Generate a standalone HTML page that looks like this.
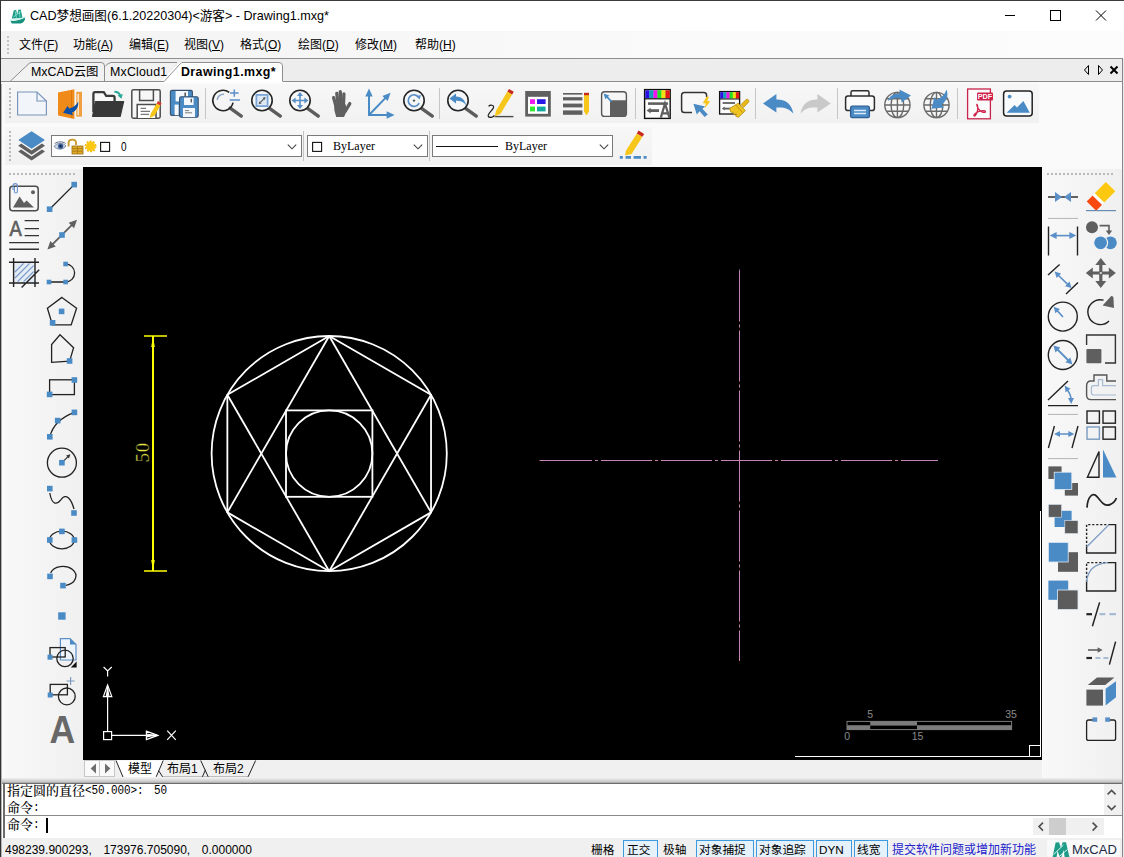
<!DOCTYPE html>
<html><head><meta charset="utf-8"><title>CAD</title>
<style>
*{box-sizing:border-box;margin:0;padding:0}
html,body{width:1124px;height:857px;overflow:hidden;background:#f0f0f0}
body{position:relative;font-family:"Liberation Sans","Noto Sans CJK SC",sans-serif;font-size:12px;color:#000}
div,span,svg{position:absolute}
#win{left:0;top:0;width:1124px;height:857px;overflow:hidden;background:#fafafa}
#bl{left:0;top:0;width:1px;height:857px;background:#333}
#bl2{left:1px;top:84px;width:1px;height:773px;background:#b4b4b4}
#bt{left:0;top:0;width:1124px;height:1px;background:#3c3c3c}
#br{left:1122px;top:58px;width:2px;height:799px;background:linear-gradient(90deg,#85858d 0,#85858d 50%,#ececec 50%,#ececec 100%)}
#title{left:1px;top:1px;width:1123px;height:30px;background:#fff}
#title .t{left:29px;top:6px;font-size:12.6px;white-space:nowrap;line-height:18px}
#menu{left:1px;top:31px;width:1123px;height:27px;background:linear-gradient(90deg,#f2f2f2,#f8f8f8 40%,#fcfcfc)}
#menu span{top:5px;font-size:12px;line-height:18px;white-space:nowrap}
#menu u{text-decoration:underline;text-underline-offset:1px}
#tabs{left:1px;top:58px;width:1122px;height:24px;background:#ededed;border-top:1px solid #8e8e8e;border-right:1px solid #8e8e8e}
.tb{background:linear-gradient(#f7f7f7,#f1f1f1)}
#tb1{left:5px;top:84px;width:1034px;height:39px}
#tb2{left:5px;top:127px;width:647px;height:38px}
#ltb{left:5px;top:169px;width:78px;height:612px;background:linear-gradient(90deg,#f8f8f8,#f0f0f0)}
#rtb{left:1043px;top:169px;width:79px;height:612px;background:linear-gradient(90deg,#f8f8f8,#f0f0f0)}
#canvas{left:83px;top:167px;width:959px;height:593px;background:#000}
#btabs{left:83px;top:760px;width:959px;height:18px;background:#f0f0f0}
#split{left:1px;top:778px;width:1122px;height:6px;background:linear-gradient(#f0f0f0,#c8c8c8 60%,#8a8a8a)}
#cmd{left:1px;top:784px;width:1122px;height:54px;background:#fff}
#status{left:1px;top:838px;width:1122px;height:19px;background:#f0f0f0}
.mono{font-family:"Liberation Serif","Noto Serif CJK SC",serif}
.sep{width:1px;background:#c4c4c4}
.combo{background:#fff;border:1px solid #7a7a7a;height:22px;top:8px}
.sbox{top:2px;height:18px;background:#e5f1fb;border:1px solid #3c9be0;border-bottom:none}
.st{top:4px;font-size:11.7px;line-height:16px;white-space:nowrap}
</style></head><body>
<div id="win">
<div id="title">
<svg style="left:7.4px;top:6px" width="19.8" height="19.8" viewBox="0 0 18 18"><path d="M3.5 10.5 L5.2 3.2 L7.4 2.6 L8.3 7 L9.4 2.6 L11.6 2.2 L13.2 10 Z" fill="#1d9a86"/><path d="M6.6 4 L7.6 9.8 M10.2 3.6 L11 9.6 M5 9 L12 4" stroke="#7fe0cf" stroke-width="0.8" fill="none"/><path d="M2.2 12.6 C6 13 11 12.2 15.6 9.6 C15.6 12.4 14 14.6 11.6 15 L3.4 15 Z" fill="#17907e"/><path d="M2 11.8 C6 12.2 11 11.2 15.4 8.8" stroke="#bfeee6" stroke-width="0.9" fill="none"/></svg>
<span class="t">CAD梦想画图(6.1.20220304)&lt;游客&gt; - Drawing1.mxg*</span>
<svg style="left:996px;top:0" width="126" height="30" viewBox="0 0 126 30"><g stroke="#000" stroke-width="1" fill="none"><path d="M8 14.5 H18"/><rect x="53.5" y="9.5" width="10" height="10"/><path d="M99 9.5 L109 19.5 M109 9.5 L99 19.5"/></g></svg>
</div>
<div id="menu">
<svg style="left:5px;top:4px" width="4" height="20"><g fill="#c2c2c2"><rect x="1" y="1" width="2" height="2"/><rect x="1" y="5" width="2" height="2"/><rect x="1" y="9" width="2" height="2"/><rect x="1" y="13" width="2" height="2"/><rect x="1" y="17" width="2" height="2"/></g></svg>
<span style="left:18px">文件(<u>F</u>)</span>
<span style="left:72px">功能(<u>A</u>)</span>
<span style="left:128px">编辑(<u>E</u>)</span>
<span style="left:183px">视图(<u>V</u>)</span>
<span style="left:239px">格式(<u>O</u>)</span>
<span style="left:297px">绘图(<u>D</u>)</span>
<span style="left:354px">修改(<u>M</u>)</span>
<span style="left:414px">帮助(<u>H</u>)</span>
</div>
<div id="tabs">
<svg style="left:0;top:0" width="1122" height="24" viewBox="0 0 1122 24">
<path d="M104.5 23 L123.5 4.5 Q124 3.5 126 3.5 L178 3.5" fill="#f1f1f1" stroke="none"/>
<path d="M104 22.5 L104 8 L109 3.5 L176 3.5 L158 22.5 Z" fill="#f2f2f2"/>
<path d="M104.5 7 Q107 4 110 3.5 L176 3.5" fill="none" stroke="#8e8e8e"/>
<path d="M9 22.5 L28 4.5 Q29 3.5 31 3.5 L100 3.5 Q103.5 3.5 103.5 7 L103.5 22.5 Z" fill="#f2f2f2" stroke="#8e8e8e"/>
<path d="M0 22.5 H162 M282 22.5 H1122" stroke="#8e8e8e" fill="none"/>
<path d="M158 23.5 L177.500 4.5 Q178.500 3.500 180.500 3.500 L278 3.500 Q281.500 3.500 281.500 7 L281.500 23.5 Z" fill="#fff"/>
<path d="M157 22.500 L163 22.5 L179.500 4.500 Q180 3.500 182 3.500 L278 3.500 Q281.500 3.500 281.500 7 L281.500 22.500" fill="none" stroke="#8e8e8e"/>
<g fill="none" stroke="#000" stroke-width="1"><path d="M1087.5 6.5 L1083.500 11 L1087.500 15.5 Z"/><path d="M1097.500 6.500 L1101.500 11 L1097.500 15.500 Z"/></g>
<path d="M1109.500 7.500 L1116.500 14.500 M1116.500 7.500 L1109.500 14.500" stroke="#000" stroke-width="2" fill="none"/>
</svg>
<span style="left:30px;top:4px;font-size:12.4px;line-height:18px;white-space:nowrap">MxCAD云图</span>
<span style="left:109px;top:4px;font-size:12.4px;line-height:18px;white-space:nowrap;letter-spacing:0.2px">MxCloud1</span>
<span style="left:180px;top:4px;font-size:12.4px;line-height:18px;white-space:nowrap;font-weight:bold;letter-spacing:0.42px">Drawing1.mxg*</span>
</div>
<div id="tb1" class="tb"></div>
<svg style="left:0;top:82px" width="1124" height="44" viewBox="0 82 1124 44"><rect x="9" y="88" width="2" height="2" fill="#b9b9b9"/><rect x="9" y="92" width="2" height="2" fill="#b9b9b9"/><rect x="9" y="96" width="2" height="2" fill="#b9b9b9"/><rect x="9" y="100" width="2" height="2" fill="#b9b9b9"/><rect x="9" y="104" width="2" height="2" fill="#b9b9b9"/><rect x="9" y="108" width="2" height="2" fill="#b9b9b9"/><rect x="9" y="112" width="2" height="2" fill="#b9b9b9"/><rect x="9" y="116" width="2" height="2" fill="#b9b9b9"/><path d="M17.6 92 H37 L46.4 101 V115 H17.6 Z" fill="#f2f5fa" stroke="#7894bc" stroke-width="1.15"/><path d="M37 92 V101 H46.4" fill="none" stroke="#7894bc" stroke-width="1.15"/><path d="M58 92.4 L74.4 89.2 V119 L58 115.6 Z" fill="#f08a18"/><path d="M76.3 91.8 H82 V116.6 H76.3 Z" fill="#f0a040"/><rect x="77.6" y="94" width="1.1" height="21" fill="#fff"/><path d="M71.5 90 V118" stroke="#d87408" stroke-width="0.8"/><path d="M63 112.800 L67.600 106 L69.200 108.400 C73.400 107.400 76.600 105 78.200 101.400 C78.800 106.600 76 111 72 112.600 L73 115.200 Z" fill="#0a50a8"/><path d="M93.400 112 V94 Q93.400 92.200 95.200 92.200 H103.800 L106.200 95.800 H112.800 Q114.600 95.800 114.600 97.600 V101.500" fill="#f8f8f8" stroke="#3a3a3a" stroke-width="2.300"/><path d="M92.600 116.400 L95.400 101.600 H123.600 L120.200 116.400 Z" fill="#383838" stroke="#383838" stroke-width="1.200" stroke-linejoin="round"/><path d="M114.400 91.800 C117.400 91.800 119.400 93.400 120.200 95.600" fill="none" stroke="#2aa898" stroke-width="2"/><path d="M117.600 95.600 L122.800 94 L121.400 98.800 Z" fill="#2aa898"/><rect x="131.8" y="89.8" width="28.4" height="28.4" rx="1.6" fill="#f7f7f7" stroke="#4c4c4c" stroke-width="1.5"/><path d="M139.6 90 V100.6 H153.4 V90" fill="none" stroke="#4c4c4c" stroke-width="1.5"/><path d="M137.2 118 V104.6 H156 V118" fill="#fff" stroke="#4c4c4c" stroke-width="1.5"/><path d="M140.6 108.4 H146 M140.6 111.4 H150 M140.6 114.4 H149" stroke="#7a7a7a" stroke-width="1.4"/><path d="M149.800 118 L150.800 113.400 L156.600 103.400 L160.400 105.600 L154.600 115.800 Z" fill="#f6c61a"/><path d="M156.600 103.400 L158 101 L161.600 103.200 L160.400 105.600 Z" fill="#d83a2a"/><rect x="170.4" y="90.4" width="22" height="25" rx="1.5" fill="#4a8bc6" stroke="#37506e" stroke-width="1.1"/><rect x="175.6" y="91" width="12.4" height="10.4" fill="#f4f7fb"/><rect x="184.4" y="92.6" width="1.6" height="4" fill="#5a5a5a"/><rect x="174.6" y="104.6" width="4" height="10.6" fill="#f4f7fb"/><rect x="179.6" y="96.8" width="18.6" height="20.4" rx="1.5" fill="#4a8bc6" stroke="#37506e" stroke-width="1.1"/><rect x="184" y="97.6" width="9.6" height="7.4" fill="#f4f7fb"/><rect x="190.6" y="98.8" width="1.4" height="3.6" fill="#5a5a5a"/><rect x="183" y="108" width="12" height="9" fill="#f4f7fb"/><path d="M185 110.6 H189 M185 112.8 H192" stroke="#7a7a7a" stroke-width="1"/><rect x="205" y="88" width="1" height="31" fill="#c6c6c6"/><rect x="439" y="88" width="1" height="31" fill="#c6c6c6"/><rect x="635" y="88" width="1" height="31" fill="#c6c6c6"/><rect x="755" y="88" width="1" height="31" fill="#c6c6c6"/><rect x="837" y="88" width="1" height="31" fill="#c6c6c6"/><rect x="957" y="88" width="1" height="31" fill="#c6c6c6"/><path d="M230.2 108.1 L241.3 116.1" stroke="#5c5c5c" stroke-width="3.4" stroke-linecap="round"/><path d="M229.2 92.4 A10.2 10.2 0 1 0 233 102.6" fill="none" stroke="#242424" stroke-width="1.6"/><path d="M217.2 100 A6.4 6.4 0 0 1 224 94.2" fill="none" stroke="#8fa9c9" stroke-width="1.6"/><path d="M230 93 H238.6 M234.3 89.4 V96.8 M229.6 100 H240" stroke="#5b8fc7" stroke-width="1.5" fill="none"/><path d="M269.2 108.1 L280.3 116.1" stroke="#5c5c5c" stroke-width="3.4" stroke-linecap="round"/><circle cx="262" cy="100.5" r="10.2" fill="#f4f6f8" stroke="#242424" stroke-width="1.6"/><rect x="256.4" y="94.9" width="11.2" height="11.2" fill="#dfe9f5" stroke="#7aa5d6" stroke-width="1.8"/><path d="M259.4 103.4 L264.8 97.8" stroke="#5a5a5a" stroke-width="1.2"/><path d="M265.60 97.00 L264.82 99.90 L262.70 97.78 Z" fill="#5a5a5a"/><path d="M258.60 104.20 L259.38 101.30 L261.50 103.42 Z" fill="#5a5a5a"/><path d="M307.2 108.1 L318.3 116.1" stroke="#5c5c5c" stroke-width="3.4" stroke-linecap="round"/><circle cx="300" cy="100.5" r="10.2" fill="#f4f6f8" stroke="#242424" stroke-width="1.6"/><path d="M293.4 100.5 H306.6 M300 93.9 V107.1" stroke="#5b8fc7" stroke-width="1.6"/><path d="M291.60 100.50 L295.60 97.50 L295.60 103.50 Z" fill="#5b8fc7"/><path d="M308.40 100.50 L304.40 103.50 L304.40 97.50 Z" fill="#5b8fc7"/><path d="M300.00 92.10 L303.00 96.10 L297.00 96.10 Z" fill="#5b8fc7"/><path d="M300.00 108.90 L297.00 104.90 L303.00 104.90 Z" fill="#5b8fc7"/><g stroke="#5f5f5f" stroke-width="3.3" stroke-linecap="round" fill="none"><path d="M333.6 97.6 L336.2 107"/><path d="M336.8 93.4 L338.2 106"/><path d="M340.3 91.7 L340.6 106"/><path d="M343.9 94 L343.4 106"/><path d="M349.8 103.6 L345.4 111"/></g><path d="M334.4 104 H345.4 L347.2 110 L344 117 H336.2 L334.3 110 Z" fill="#5f5f5f"/><path d="M369 94 V115 H388 M369 115 L386 97.4" stroke="#4a8bc6" stroke-width="2" fill="none"/><path d="M369.00 88.60 L372.70 96.60 L365.30 96.60 Z" fill="#4a8bc6"/><path d="M394.60 115.00 L386.60 118.70 L386.60 111.30 Z" fill="#4a8bc6"/><path d="M390.60 92.80 L387.70 101.12 L382.38 95.98 Z" fill="#4a8bc6"/><path d="M421.2 108.1 L432.3 116.1" stroke="#5c5c5c" stroke-width="3.4" stroke-linecap="round"/><circle cx="414" cy="100.5" r="10.2" fill="#f4f6f8" stroke="#242424" stroke-width="1.6"/><path d="M418.6 97 A5.8 5.8 0 1 0 419.2 103.2" fill="none" stroke="#5b8fc7" stroke-width="1.7"/><path d="M419.60 99.40 L416.15 96.18 L420.98 94.89 Z" fill="#5b8fc7"/><circle cx="414" cy="100.6" r="1.2" fill="#5a5a5a"/><path d="M465.2 108.1 L476.3 116.1" stroke="#5c5c5c" stroke-width="3.4" stroke-linecap="round"/><circle cx="458" cy="100.5" r="10.2" fill="#f4f6f8" stroke="#242424" stroke-width="1.6"/><path d="M449.4 98.4 L456 93.4 V96.4 C461 96.4 465 99.6 466.4 105.4 C463.6 101.6 460 100.6 456 100.8 V103.6 Z" fill="#4a8bc6"/><path d="M494.6 116.6 H513.4" stroke="#4a4a4a" stroke-width="1.4"/><path d="M494.8 116.4 L496 110.8 L507.4 91.6 L512.2 94.4 L500.6 113.8 Z" fill="#f6c61a"/><path d="M507.4 91.6 L509 89 L513.8 91.8 L512.2 94.4 Z" fill="#c8281c"/><path d="M488.6 106.4 C490 104.6 494 104.8 493.6 107.4 C493 110 487.6 113.4 488.2 116 C489 118.4 493 117.6 494.4 115.4" fill="none" stroke="#1a1a1a" stroke-width="1.2"/><rect x="525.2" y="91" width="25.6" height="25.6" fill="#606060"/><rect x="528" y="96.8" width="20" height="17" fill="#fff"/><rect x="530" y="99.2" width="5" height="4.8" fill="#f018f0"/><rect x="537" y="99.2" width="8.6" height="4.8" fill="#2a18e8"/><rect x="530" y="106.6" width="5" height="4.8" fill="#30e830"/><rect x="537" y="106.6" width="8.6" height="4.8" fill="#12a8a0"/><rect x="563" y="93" width="19.4" height="1.6" fill="#5f5f5f"/><rect x="563" y="97.2" width="19.4" height="3.2" fill="#5f5f5f"/><rect x="563" y="103.6" width="19.4" height="3.8" fill="#5f5f5f"/><rect x="563" y="110.4" width="19.4" height="4.4" fill="#5f5f5f"/><path d="M584 95 H589 V111.6 L586.5 115.4 L584 111.6 Z" fill="#f6c61a"/><rect x="584" y="92.8" width="5" height="2.4" fill="#c8281c"/><rect x="601.6" y="91.8" width="24.8" height="24.6" rx="3" fill="#f6f6f6" stroke="#555" stroke-width="1.4"/><path d="M610 100.2 H626.4 V113.4 Q626.4 116.4 623.4 116.4 H610 Z" fill="#5f5f5f"/><path d="M611.4 101.6 L606.6 96.4" stroke="#4a8bc6" stroke-width="1.6"/><path d="M603.60 93.40 L609.33 95.44 L605.24 99.26 Z" fill="#4a8bc6"/><rect x="644.6" y="89.6" width="25.6" height="28.8" fill="#fdfdfd" stroke="#111" stroke-width="1.4"/><rect x="645.30" y="90.3" width="4.33" height="8" fill="#2a10e0"/><rect x="649.33" y="90.3" width="4.33" height="8" fill="#12a0b8"/><rect x="653.37" y="90.3" width="4.33" height="8" fill="#f010f0"/><rect x="657.40" y="90.3" width="4.33" height="8" fill="#20e020"/><rect x="661.43" y="90.3" width="4.33" height="8" fill="#f0e010"/><rect x="665.47" y="90.3" width="4.33" height="8" fill="#e01818"/><path d="M645 98.8 H670" stroke="#111" stroke-width="1.2"/><path d="M648 103.600 H668" stroke="#5f5f5f" stroke-width="2.600"/><path d="M650 110.600 H659" stroke="#5f5f5f" stroke-width="2.800"/><path d="M646.60 110.60 L650.60 107.80 L650.60 113.40 Z" fill="#5f5f5f"/><path d="M660.800 117.600 L665 103.600 L669.400 117.600 M662.400 113.400 H668" fill="none" stroke="#5f5f5f" stroke-width="2.200"/><path d="M692 112.6 H684.4 Q681.6 112.6 681.6 109.8 V95.2 Q681.6 92.4 684.4 92.4 H703.8 Q706.6 92.4 706.6 95.2 V97" fill="#f8f8f8" stroke="#333" stroke-width="1.5"/><path d="M693.4 103.8 L705.2 106.6 L702.4 108.8 L707.8 114.4 L704.6 117 L699.6 111.2 L696.8 114.6 Z" fill="#4a8bc6"/><path d="M706.8 96.6 L702.8 103 L705.8 103.6 L704.6 108.4 L710.2 101.4 L707.2 100.8 L709 96.8 Z" fill="#f6c61a"/><rect x="719.6" y="91.6" width="20" height="22.4" fill="#fdfdfd" stroke="#111" stroke-width="1.3"/><rect x="720.20" y="92.2" width="3.43" height="6.4" fill="#2a10e0"/><rect x="723.33" y="92.2" width="3.43" height="6.4" fill="#12a0b8"/><rect x="726.47" y="92.2" width="3.43" height="6.4" fill="#f010f0"/><rect x="729.60" y="92.2" width="3.43" height="6.4" fill="#20e020"/><rect x="732.73" y="92.2" width="3.43" height="6.4" fill="#f0e010"/><rect x="735.87" y="92.2" width="3.43" height="6.4" fill="#e01818"/><path d="M720 99 H739.6" stroke="#111" stroke-width="1"/><path d="M722.6 103 H735" stroke="#5f5f5f" stroke-width="1.8"/><path d="M724.6 108.6 H732" stroke="#5f5f5f" stroke-width="1.8"/><path d="M721.80 108.60 L724.80 106.60 L724.80 110.60 Z" fill="#5f5f5f"/><path d="M741 104.6 L746 99.6 Q747.6 98.6 748.6 100 Q749.4 101.2 748.4 102.4 L743.6 107.4 Z" fill="#e8b818" stroke="#a88408" stroke-width="0.6"/><path d="M729.6 108.4 L738.2 103.2 L745.4 110.6 L738.4 117.4 L735.6 116 L736.4 114 L733.4 114.6 L733.6 112.4 L730.8 112.2 Z" fill="#f0c420" stroke="#a88408" stroke-width="0.7"/><path d="M735.6 104.8 L742.8 112.6" stroke="#a88408" stroke-width="0.8"/><path d="M763 103.4 L776.4 94 V99.6 C785 99.4 791.6 103.6 793.4 113.8 C789.4 108.4 783.6 107 776.4 107.6 V112.6 Z" fill="#4a8bc6"/><path d="M830.8 103.4 L817.4 94 V99.6 C808.800 99.400 802.200 103.600 800.400 113.800 C804.400 108.400 810.200 107 817.400 107.600 V112.600 Z" fill="#c9c9c9"/><rect x="851" y="90.8" width="18" height="8" rx="1.6" fill="#fafafa" stroke="#2e2e2e" stroke-width="1.5"/><rect x="845.6" y="96" width="28.8" height="14.6" rx="2.4" fill="#fbfbfb" stroke="#2e2e2e" stroke-width="1.5"/><rect x="850.6" y="106.2" width="18.8" height="11.4" rx="1.6" fill="#4a8bc6" stroke="#2f5f94" stroke-width="1.3"/><path d="M854 110.4 H866 M854 113.6 H866" stroke="#dcecfa" stroke-width="1.5"/><g fill="none" stroke="#6a6a6a" stroke-width="1.4"><circle cx="897.4" cy="105" r="12.6" fill="#f6f6f6"/><ellipse cx="897.4" cy="105" rx="6.3" ry="12.6"/><path d="M897.4 92.4 V117.6 M884.8 105 H910.0 M886.438 98.7 H908.362 M886.438 111.3 H908.362"/></g><path d="M888 101 C889.6 95.6 894.4 93.4 900 93.6 L899.4 89.6 L911 95.4 L901.6 102.4 L901 98.4 C896 97.600 891.6 98.4 888 101 Z" fill="#4a8bc6"/><g fill="none" stroke="#6a6a6a" stroke-width="1.4"><circle cx="936.5" cy="105" r="12.6" fill="#f6f6f6"/><ellipse cx="936.5" cy="105" rx="6.3" ry="12.6"/><path d="M936.5 92.4 V117.6 M923.9 105 H949.1 M925.538 98.7 H947.462 M925.538 111.3 H947.462"/></g><path d="M946.4 89.6 C949 96 946.4 101.4 941.6 104.600 L944 107.400 L931.6 108.8 L934.4 97 L937 100 C941.400 97.800 945 94.600 946.400 89.600 Z" fill="#4a8bc6"/><rect x="967.6" y="89" width="22.8" height="29.8" fill="#fbfbfb" stroke="#c8244c" stroke-width="1.3"/><rect x="977" y="92.4" width="16" height="8" rx="1" fill="#d0214a"/><text x="985" y="99.2" font-family="Liberation Sans,sans-serif" font-weight="bold" font-size="7.2" fill="#fff" text-anchor="middle">PDF</text><path d="M976.8 104.6 C977.4 108 978.6 110 981.6 111.6 C983.6 112.6 985.6 112.8 985.4 111.4 C985 110 981 110.4 977.6 112 C974.6 113.6 973 115.6 974.4 116 C976 116 978 111 977.8 107.600 C977.600 105 976.600 103.800 976.800 104.600 Z" fill="none" stroke="#d0214a" stroke-width="1.3"/><rect x="1003.6" y="91" width="28.6" height="25" rx="3" fill="#f8fafc" stroke="#222" stroke-width="1.5"/><circle cx="1009.6" cy="96.6" r="1.9" fill="#4a8bc6"/><path d="M1006.6 112.8 L1014.6 105 L1017 107.4 L1023.4 101 L1029.8 112.800 Z" fill="#4a8bc6"/></svg>
<div id="tb2" class="tb"></div>
<svg style="left:0;top:126px" width="1124" height="41" viewBox="0 126 1124 41"><rect x="9" y="131" width="2" height="2" fill="#b9b9b9"/><rect x="9" y="135" width="2" height="2" fill="#b9b9b9"/><rect x="9" y="139" width="2" height="2" fill="#b9b9b9"/><rect x="9" y="143" width="2" height="2" fill="#b9b9b9"/><rect x="9" y="147" width="2" height="2" fill="#b9b9b9"/><rect x="9" y="151" width="2" height="2" fill="#b9b9b9"/><rect x="9" y="155" width="2" height="2" fill="#b9b9b9"/><rect x="9" y="159" width="2" height="2" fill="#b9b9b9"/><path d="M18.2 151.6 L31.600 160.6 L45 151.6 L42 149.4 L31.6 156.4 L21.2 149.4 Z" fill="#5f5f5f"/><path d="M18.2 145.800 L31.600 154.800 L45 145.800 L42 143.600 L31.600 150.600 L21.200 143.600 Z" fill="#5f5f5f"/><path d="M18.4 140 L31.6 131.200 L44.800 140 L31.6 148.800 Z" fill="#4a8bc6" stroke="#f4f4f4" stroke-width="1.4" stroke-linejoin="round"/><path d="M19.4 140 L31.6 132 L43.800 140 L31.6 148 Z" fill="#4a8bc6" stroke="#4a8bc6" stroke-width="1.4" stroke-linejoin="round"/></svg>
<div class="combo" style="left:51px;top:135px;width:251px"></div>
<div class="combo" style="left:307px;top:135px;width:121px"></div>
<div class="combo" style="left:432px;top:135px;width:181px"></div>
<div class="sep" style="left:303px;top:131px;height:30px"></div><div class="sep" style="left:429px;top:131px;height:30px"></div>
<svg style="left:0;top:126px" width="1124" height="41" viewBox="0 126 1124 41"><path d="M54 146.4 C57 142.4 63 142.2 66 146 C63.4 150 57 150.2 54 146.4 Z" fill="#c8d4e4" stroke="#6a7a94" stroke-width="0.8"/><circle cx="60.600" cy="146.2" r="2.6" fill="#3a5f9a"/><circle cx="60.6" cy="146.2" r="1.1" fill="#0c1c3c"/><path d="M54.600 143.6 C57.6 141.4 62.600 141.200 65.600 143.400" stroke="#5a6a84" stroke-width="1" fill="none"/><path d="M68.6 146.6 V143 C68.6 138.6 76 138.6 76 143 V145" fill="none" stroke="#c89828" stroke-width="1.8"/><rect x="72" y="146" width="11" height="8" fill="#e0a828" stroke="#9a7010" stroke-width="0.8"/><path d="M72.4 148.6 H82.600 M72.400 151.2 H82.600 M77.500 146.4 V153.600" stroke="#9a7010" stroke-width="0.7"/><circle cx="90.6" cy="146.4" r="4.6" fill="#fcc810"/><circle cx="90.600" cy="146.400" r="5.2" fill="none" stroke="#f8b808" stroke-width="1.4" stroke-dasharray="2 1.27"/><rect x="100.6" y="142.4" width="9" height="9" fill="#fff" stroke="#111" stroke-width="1.1"/><rect x="312.600" y="142.400" width="9" height="9" fill="#fff" stroke="#111" stroke-width="1.100"/><path d="M287.8 144.6 L292 148.8 L296.2 144.6" fill="none" stroke="#444" stroke-width="1.1"/><path d="M413.8 144.6 L418 148.8 L422.2 144.6" fill="none" stroke="#444" stroke-width="1.1"/><path d="M599.8 144.6 L604 148.8 L608.2 144.6" fill="none" stroke="#444" stroke-width="1.1"/><path d="M436 146.5 H498" stroke="#111" stroke-width="1"/><path d="M625 155.600 L626 150.600 L636.800 133.400 L642.400 136.800 L631.600 154 Z" fill="#f6c61a"/><path d="M636.800 133.400 L638.600 130.600 L644.200 134 L642.400 136.800 Z" fill="#c8281c"/><path d="M619.800 157.400 H622.800 M625.600 157.400 H631 M633.600 157.400 H641 M643.600 157.400 H646.600" stroke="#4a8bc6" stroke-width="2.6"/></svg>
<span style="left:120.6px;top:139.5px;font-size:12.5px;line-height:14px;transform:scaleX(0.8);transform-origin:0 0">0</span>
<span class="mono" style="left:333px;top:139px;font-size:12px;line-height:14px">ByLayer</span>
<span class="mono" style="left:505px;top:139px;font-size:12px;line-height:14px">ByLayer</span>
<div id="ltb"></div>
<svg style="left:0;top:167px" width="84" height="615" viewBox="0 167 84 615"><rect x="9" y="173" width="2" height="2" fill="#b9b9b9"/><rect x="13" y="173" width="2" height="2" fill="#b9b9b9"/><rect x="17" y="173" width="2" height="2" fill="#b9b9b9"/><rect x="21" y="173" width="2" height="2" fill="#b9b9b9"/><rect x="25" y="173" width="2" height="2" fill="#b9b9b9"/><rect x="29" y="173" width="2" height="2" fill="#b9b9b9"/><rect x="33" y="173" width="2" height="2" fill="#b9b9b9"/><rect x="37" y="173" width="2" height="2" fill="#b9b9b9"/><rect x="41" y="173" width="2" height="2" fill="#b9b9b9"/><rect x="45" y="173" width="2" height="2" fill="#b9b9b9"/><rect x="49" y="173" width="2" height="2" fill="#b9b9b9"/><rect x="53" y="173" width="2" height="2" fill="#b9b9b9"/><rect x="57" y="173" width="2" height="2" fill="#b9b9b9"/><rect x="61" y="173" width="2" height="2" fill="#b9b9b9"/><rect x="65" y="173" width="2" height="2" fill="#b9b9b9"/><rect x="69" y="173" width="2" height="2" fill="#b9b9b9"/><rect x="73" y="173" width="2" height="2" fill="#b9b9b9"/><rect x="9.8" y="186.200" width="28.4" height="24.6" rx="3" fill="#f7f7f7" stroke="#4a4a4a" stroke-width="1.5"/><circle cx="33" cy="192.200" r="2" fill="#5f5f5f"/><path d="M13 207.600 L19.6 196.600 L24 203 L26.600 200.400 L34 207.600 Z" fill="#5f5f5f"/><path d="M13 190 V186 Q13 183.600 15.200 183.600 Q17.400 183.600 17.400 186 V191.400 Q17.400 193 15.800 193 Q14.400 193 14.400 191.400 V187" fill="none" stroke="#6a96cc" stroke-width="1.1"/><path d="M49.6 209.2 L74.2 184.6" stroke="#222" stroke-width="1.3"/><rect x="46.80" y="206.40" width="5.6" height="5.6" fill="#4a8bc6"/><rect x="71.40" y="181.80" width="5.6" height="5.6" fill="#4a8bc6"/><text x="0" y="0" transform="translate(9.4 236.4) scale(0.86 1)" font-family="Liberation Sans,sans-serif" font-size="21.4" fill="#5f5f5f" stroke="#5f5f5f" stroke-width="0.7">A</text><path d="M24.6 220.600 H39 M24.600 228.600 H39 M24.600 235.600 H39 M9.200 242.600 H39 M9.200 249.200 H39" stroke="#333" stroke-width="1.4"/><path d="M51.4 245.4 L73 223.800" stroke="#5f5f5f" stroke-width="1.8"/><path d="M77.00 219.80 L74.03 228.14 L68.66 222.77 Z" fill="#5f5f5f"/><path d="M47.40 249.40 L50.37 241.06 L55.74 246.43 Z" fill="#5f5f5f"/><rect x="59.20" y="232.20" width="5.6" height="5.6" fill="#4a8bc6"/><rect x="14" y="262.400" width="20.600" height="20.400" fill="#e4ecf6"/><path d="M15 272 L23.600 263.400 M15 278 L29.600 263.400 M17.600 281.600 L33.600 265.600 M23.600 281.600 L33.600 271.600" stroke="#7a9ac8" stroke-width="1.3"/><path d="M13.600 258 V287 M35 258 V287 M9 262.200 H39 M9 283 H39 M21.600 287.400 L39.200 269.800" stroke="#222" stroke-width="1.4" fill="none"/><path d="M49 282 H65.600 A9 9 0 0 0 65.600 264" fill="none" stroke="#222" stroke-width="1.3"/><rect x="46.70" y="279.70" width="4.6" height="4.6" fill="#4a8bc6"/><rect x="63.30" y="279.70" width="4.6" height="4.6" fill="#4a8bc6"/><rect x="63.30" y="261.70" width="4.6" height="4.6" fill="#4a8bc6"/><path d="M61.900 297.400 L76.600 308.200 L71.200 324.800 H52.400 L47.400 308.200 Z" fill="none" stroke="#222" stroke-width="1.3"/><rect x="58.80" y="308.60" width="5.6" height="5.6" fill="#4a8bc6"/><rect x="49.80" y="320.00" width="5.6" height="5.6" fill="#4a8bc6"/><path d="M60 334.800 L73.600 347.800 L69.600 361.200 L51.600 362.400 V344.600 Z" fill="none" stroke="#222" stroke-width="1.3"/><rect x="66.80" y="358.20" width="5.6" height="5.6" fill="#4a8bc6"/><rect x="49.600" y="379.800" width="24.800" height="14.800" fill="none" stroke="#222" stroke-width="1.3"/><rect x="46.80" y="391.60" width="5.6" height="5.6" fill="#4a8bc6"/><rect x="71.60" y="377.20" width="5.6" height="5.6" fill="#4a8bc6"/><path d="M49.800 436.800 Q54 420 74.400 412.400" fill="none" stroke="#222" stroke-width="1.3"/><rect x="47.00" y="434.00" width="5.6" height="5.6" fill="#4a8bc6"/><rect x="54.90" y="417.80" width="5.6" height="5.6" fill="#4a8bc6"/><rect x="71.60" y="409.60" width="5.6" height="5.6" fill="#4a8bc6"/><circle cx="61.900" cy="462.700" r="14.500" fill="none" stroke="#222" stroke-width="1.3"/><path d="M62 462.600 L68 456.600" stroke="#333" stroke-width="1.3"/><path d="M70.40 454.20 L68.99 458.44 L66.16 455.61 Z" fill="#333"/><rect x="59.10" y="459.90" width="5.6" height="5.6" fill="#4a8bc6"/><path d="M49.800 493 C52 506 57 504.600 61 499.600 C66 493 71 498 74 509" fill="none" stroke="#222" stroke-width="1.3"/><rect x="47.00" y="485.80" width="5.6" height="5.6" fill="#4a8bc6"/><rect x="71.20" y="510.20" width="5.6" height="5.6" fill="#4a8bc6"/><ellipse cx="61.900" cy="540" rx="12.300" ry="8.800" fill="none" stroke="#222" stroke-width="1.3"/><rect x="47.00" y="537.20" width="5.6" height="5.6" fill="#4a8bc6"/><rect x="59.10" y="528.60" width="5.6" height="5.6" fill="#4a8bc6"/><rect x="71.60" y="537.20" width="5.6" height="5.6" fill="#4a8bc6"/><path d="M50.600 573 A13 9.600 0 1 1 66 585.400" fill="none" stroke="#222" stroke-width="1.3"/><rect x="47.20" y="573.60" width="5.6" height="5.6" fill="#4a8bc6"/><rect x="60.20" y="582.80" width="5.6" height="5.6" fill="#4a8bc6"/><rect x="58.20" y="612.30" width="7.4" height="7.4" fill="#4a8bc6"/><path d="M60.400 638.600 H70 L76 644.600 V660 H60.400 Z" fill="#eef4fb" stroke="#5b8fc7" stroke-width="1.2"/><path d="M70 638.600 V644.600 H76 Z" fill="#4a8bc6"/><rect x="50" y="647.600" width="15.200" height="9.400" fill="none" stroke="#222" stroke-width="1.3"/><circle cx="65" cy="658.400" r="8.200" fill="none" stroke="#222" stroke-width="1.3"/><rect x="47.50" y="654.70" width="5" height="5" fill="#4a8bc6"/><path d="M76.600 661.600 V667.400 H70.800 Z" fill="#111"/><rect x="50.200" y="684.400" width="17.200" height="10.400" fill="none" stroke="#222" stroke-width="1.3"/><circle cx="66.800" cy="696.400" r="8.400" fill="none" stroke="#222" stroke-width="1.3"/><rect x="47.70" y="692.50" width="5" height="5" fill="#4a8bc6"/><path d="M66.600 681 H74.600 M70.600 677 V685" stroke="#7a9ac0" stroke-width="1.2"/><text x="62.4" y="743.4" font-family="Liberation Sans,sans-serif" font-weight="bold" font-size="39.5" fill="#686868" text-anchor="middle" transform="translate(62.4 0) scale(0.9 1) translate(-62.4 0)">A</text></svg>
<div id="rtb"></div>
<svg style="left:1040px;top:167px" width="84" height="615" viewBox="1040 167 84 615"><rect x="1047" y="173" width="2" height="2" fill="#b9b9b9"/><rect x="1051" y="173" width="2" height="2" fill="#b9b9b9"/><rect x="1055" y="173" width="2" height="2" fill="#b9b9b9"/><rect x="1059" y="173" width="2" height="2" fill="#b9b9b9"/><rect x="1063" y="173" width="2" height="2" fill="#b9b9b9"/><rect x="1067" y="173" width="2" height="2" fill="#b9b9b9"/><rect x="1071" y="173" width="2" height="2" fill="#b9b9b9"/><rect x="1075" y="173" width="2" height="2" fill="#b9b9b9"/><rect x="1079" y="173" width="2" height="2" fill="#b9b9b9"/><rect x="1083" y="173" width="2" height="2" fill="#b9b9b9"/><rect x="1087" y="173" width="2" height="2" fill="#b9b9b9"/><rect x="1091" y="173" width="2" height="2" fill="#b9b9b9"/><rect x="1095" y="173" width="2" height="2" fill="#b9b9b9"/><rect x="1099" y="173" width="2" height="2" fill="#b9b9b9"/><rect x="1103" y="173" width="2" height="2" fill="#b9b9b9"/><rect x="1107" y="173" width="2" height="2" fill="#b9b9b9"/><rect x="1111" y="173" width="2" height="2" fill="#b9b9b9"/><path d="M1048 197 H1078" stroke="#222" stroke-width="1.4"/><path d="M1062.00 197.00 L1055.00 202.00 L1055.00 192.00 Z" fill="#5b8fc7"/><path d="M1064.00 197.00 L1071.00 192.00 L1071.00 202.00 Z" fill="#5b8fc7"/><path d="M1048 218.4 H1078" stroke="#b4b4b4" stroke-width="1"/><path d="M1048 414.4 H1078" stroke="#b4b4b4" stroke-width="1"/><path d="M1048 458.6 H1078" stroke="#b4b4b4" stroke-width="1"/><g transform="rotate(-45.5 1101 196.4)"><rect x="1087.35" y="189.800" width="8.5" height="13.2" fill="#f84a10"/><rect x="1095.85" y="189.800" width="3" height="13.2" fill="#fff"/><rect x="1098.85" y="189.800" width="15.8" height="13.2" fill="#fcc810"/></g><path d="M1086 210.600 H1116" stroke="#6a8ab0" stroke-width="1.2"/><path d="M1048.500 226.600 V255.600 M1077.500 226.600 V255.600" stroke="#222" stroke-width="1.4"/><path d="M1055 235.600 H1071" stroke="#5b8fc7" stroke-width="1.6"/><path d="M1049.60 235.60 L1056.60 232.10 L1056.60 239.10 Z" fill="#5b8fc7"/><path d="M1076.40 235.60 L1069.40 239.10 L1069.40 232.10 Z" fill="#5b8fc7"/><circle cx="1092" cy="227.200" r="6" fill="#5f5f5f"/><path d="M1099.600 225.600 H1109 V231" fill="none" stroke="#5f5f5f" stroke-width="1.6"/><path d="M1109.00 235.00 L1105.80 230.40 L1112.20 230.40 Z" fill="#5f5f5f"/><circle cx="1110.400" cy="242.800" r="6.400" fill="#4a8bc6"/><circle cx="1100.600" cy="242.800" r="7" fill="#4a8bc6" stroke="#f4f4f4" stroke-width="1.2"/><path d="M1048 275 L1059.600 264.400 M1066 294 L1078 282.400" stroke="#222" stroke-width="1.4"/><path d="M1058 275 L1068 284.600" stroke="#5b8fc7" stroke-width="1.6"/><path d="M1054.60 271.60 L1061.14 273.47 L1056.69 278.07 Z" fill="#5b8fc7"/><path d="M1071.60 288.00 L1065.06 286.13 L1069.51 281.53 Z" fill="#5b8fc7"/><path d="M1090.8 273 H1110.8 M1100.8 263 V283" stroke="#5f5f5f" stroke-width="3.2"/><path d="M1085.80 273.00 L1092.80 267.50 L1092.80 278.50 Z" fill="#5f5f5f"/><path d="M1115.80 273.00 L1108.80 278.50 L1108.80 267.50 Z" fill="#5f5f5f"/><path d="M1100.80 258.00 L1106.30 265.00 L1095.30 265.00 Z" fill="#5f5f5f"/><path d="M1100.80 288.00 L1095.30 281.00 L1106.30 281.00 Z" fill="#5f5f5f"/><rect x="1099.8" y="272" width="2" height="2" fill="#d0d0d0"/><circle cx="1062.800" cy="316.600" r="14.500" fill="none" stroke="#222" stroke-width="1.4"/><path d="M1063 317 L1057 310.400" stroke="#5b8fc7" stroke-width="1.6"/><path d="M1053.60 306.80 L1060.03 309.01 L1055.35 313.37 Z" fill="#5b8fc7"/><path d="M1109 321 A12.400 12.400 0 1 1 1103.600 300.200" fill="none" stroke="#222" stroke-width="1.4"/><path d="M1102.600 305.600 L1111 296.200 Q1113 295.600 1113.400 297.600 L1114 308 Z" fill="#5f5f5f"/><circle cx="1062.800" cy="355" r="14.500" fill="none" stroke="#222" stroke-width="1.4"/><path d="M1057 349 L1069 361" stroke="#5b8fc7" stroke-width="1.800"/><path d="M1053.40 345.40 L1060.40 347.45 L1055.45 352.40 Z" fill="#5b8fc7"/><path d="M1072.40 364.40 L1065.40 362.35 L1070.35 357.40 Z" fill="#5b8fc7"/><path d="M1086.600 345 V335 H1115.400 V363 H1105" fill="none" stroke="#333" stroke-width="1.4"/><rect x="1086.400" y="349" width="15" height="14.200" rx="1" fill="#5f5f5f"/><path d="M1048 405.600 H1078 M1048 400 L1068 381" stroke="#222" stroke-width="1.4" fill="none"/><path d="M1067.400 390 Q1071 395 1071 399" fill="none" stroke="#5b8fc7" stroke-width="1.500"/><path d="M1064.60 385.60 L1070.50 388.79 L1065.58 392.24 Z" fill="#5b8fc7"/><path d="M1071.20 404.00 L1067.99 398.11 L1073.99 397.90 Z" fill="#5b8fc7"/><path d="M1116 399.600 H1091 Q1086.600 399.600 1086.600 395 V386 Q1086.600 381 1091 381 H1094 V375 H1106.800 V381 H1116" fill="none" stroke="#555" stroke-width="1.400"/><path d="M1116 395 H1093.600 Q1091.400 395 1091.400 392.600 V388 Q1091.400 385.600 1093.600 385.600 H1098.400 V379.600 H1102.600 V385.600 H1116" fill="none" stroke="#a8bcd4" stroke-width="1.200"/><rect x="1087" y="411" width="12.400" height="12.200" fill="none" stroke="#222" stroke-width="1.400"/><rect x="1103" y="411" width="12.400" height="12.200" fill="none" stroke="#222" stroke-width="1.400"/><rect x="1103" y="427" width="12.400" height="12.200" fill="none" stroke="#222" stroke-width="1.400"/><rect x="1087" y="427" width="12.400" height="12.200" fill="none" stroke="#7a9ac0" stroke-width="1.400"/><path d="M1048.400 448 L1054.400 426 M1072 448 L1078 426" stroke="#222" stroke-width="1.400"/><path d="M1059 434 H1069" stroke="#5b8fc7" stroke-width="1.500"/><path d="M1054.00 434.00 L1060.00 431.00 L1060.00 437.00 Z" fill="#5b8fc7"/><path d="M1074.40 434.00 L1068.40 437.00 L1068.40 431.00 Z" fill="#5b8fc7"/><path d="M1087.400 477.200 H1099 V451.600 Z" fill="none" stroke="#222" stroke-width="1.400"/><path d="M1103 449.600 V477.600 H1116.400 Z" fill="#4a8bc6"/><rect x="1048.400" y="466.400" width="13.200" height="12.600" fill="#5c5c5c"/><rect x="1064.800" y="483" width="13.200" height="12.600" fill="#5c5c5c"/><rect x="1054.200" y="472.200" width="17.600" height="17.200" fill="#4a8bc6" stroke="#dfe9f5" stroke-width="0.800"/><path d="M1087 507.600 C1087.600 497 1092.600 491.600 1097 496.600 C1101 501.600 1104.600 507 1110 504.600 C1113.600 503 1115.600 500.600 1116.400 498" fill="none" stroke="#222" stroke-width="1.700"/><rect x="1054.600" y="510.800" width="17" height="16.200" fill="#4a8bc6"/><rect x="1048.400" y="504.400" width="13.200" height="12.800" fill="#5c5c5c" stroke="#dfe9f5" stroke-width="0.600"/><rect x="1064.800" y="520.600" width="13.200" height="13" fill="#5c5c5c" stroke="#dfe9f5" stroke-width="0.600"/><path d="M1109 524.600 H1115.600 V553 H1086.600 V547" fill="none" stroke="#222" stroke-width="1.400"/><path d="M1086.600 547 V524.600 H1109" fill="none" stroke="#222" stroke-width="1.400" stroke-dasharray="2.200 1.800"/><path d="M1086.600 547 L1109 524.600" stroke="#7a9ac0" stroke-width="1.300"/><rect x="1058" y="552.200" width="20" height="19.600" fill="#5c5c5c"/><rect x="1048.400" y="542.400" width="19.800" height="19.600" fill="#4a8bc6" stroke="#dfe9f5" stroke-width="0.800"/><path d="M1108 562.600 H1115.600 V591 H1086.600 V582" fill="none" stroke="#222" stroke-width="1.400"/><path d="M1086.600 582 V562.600 H1108" fill="none" stroke="#222" stroke-width="1.400" stroke-dasharray="2.200 1.800"/><path d="M1086.600 582 Q1088 564 1108 562.600" fill="none" stroke="#7a9ac0" stroke-width="1.300"/><rect x="1048.400" y="580.600" width="19.800" height="19.200" fill="#4a8bc6"/><rect x="1057.600" y="590" width="20.400" height="19.600" fill="#5c5c5c" stroke="#dfe9f5" stroke-width="0.800"/><path d="M1099.600 602.400 L1092.400 626.200" stroke="#222" stroke-width="1.500"/><path d="M1086.400 614.200 H1092" stroke="#222" stroke-width="2.200"/><path d="M1099.400 614.200 H1105.400 M1109.400 614.200 H1116" stroke="#a8bcd4" stroke-width="2.200"/><path d="M1088 650 H1098" stroke="#5f5f5f" stroke-width="1.600"/><path d="M1102.60 650.00 L1097.60 652.80 L1097.60 647.20 Z" fill="#5f5f5f"/><path d="M1086.400 658 H1092" stroke="#222" stroke-width="2.200"/><path d="M1095.400 658 H1100.400 M1103.400 658 H1108.400" stroke="#a8bcd4" stroke-width="2.200"/><path d="M1115.600 641.600 L1109.400 664.600" stroke="#222" stroke-width="1.500"/><rect x="1086.400" y="689.600" width="16.600" height="16" fill="#5c5c5c"/><path d="M1087.800 685 L1097 677.600 H1114.400 L1105.200 685 Z" fill="#5c5c5c"/><path d="M1105.600 688.800 L1116 681.200 V697.200 L1105.600 705.600 Z" fill="#4a8bc6"/><path d="M1093 720 H1088.600 Q1086.600 720 1086.600 722 V738.400 Q1086.600 740.400 1088.600 740.400 H1113.600 Q1115.600 740.400 1115.600 738.400 V722 Q1115.600 720 1113.600 720 H1109.600" fill="none" stroke="#222" stroke-width="1.300"/><rect x="1092.400" y="717.400" width="4.800" height="4.400" fill="#5b8fc7"/><rect x="1105.200" y="717.400" width="4.800" height="4.400" fill="#5b8fc7"/></svg>
<div id="canvas"></div>
<svg style="left:83px;top:167px" width="959" height="593" viewBox="83 167 959 593"><g fill="none" stroke="#fff" stroke-width="1.8"><circle cx="329.2" cy="453.6" r="117.6"/><path d="M329.20 336.00 L227.36 394.80 L227.36 512.40 L329.20 571.20 L431.04 512.40 L431.04 394.80 Z"/><path d="M329.20 336.00 L227.36 512.40"/><path d="M329.20 336.00 L431.04 512.40"/><path d="M329.20 571.20 L227.36 394.80"/><path d="M329.20 571.20 L431.04 394.80"/><rect x="286.00" y="410.40" width="86.4" height="86.4"/><circle cx="329.2" cy="453.6" r="43.2"/></g><g stroke="#ffff00" fill="none"><path d="M144 336 H167 M144 571 H167" stroke-width="1.4"/><path d="M153 336 V571" stroke-width="2"/></g><path d="M153 336.500 L154.800 347 H151.200 Z M153 570.500 L154.800 560 H151.200 Z" fill="#ffff00"/><text x="0" y="0" transform="translate(148.600 462.400) rotate(-90)" font-family="Liberation Serif,serif" font-size="19" fill="#e8e84a" stroke="#000" stroke-width="0.350" letter-spacing="0.6">50</text><g stroke="#c584b6" stroke-width="1" fill="none"><path d="M541 460.500 H938" stroke-dasharray="51 3 3 3"/><path d="M539.500 460.500 H541"/><path d="M739.500 270.500 V661" stroke-dasharray="51 3 3 3"/><path d="M739.500 269.500 V270.500"/></g><g stroke="#fff" stroke-width="1.2" fill="none"><rect x="103.600" y="731.600" width="8" height="8"/><path d="M107.600 731.600 V686 M111.600 735.400 H157"/><path d="M107.600 685 L103.400 696.600 H111.800 Z M106.200 696.600 L107.600 689 L109 696.600"/><path d="M157.800 735.400 L146.400 731.200 V739.600 Z M146.400 734 L154 735.400 L146.400 736.800"/><path d="M103.600 667 L107.600 671 L111.800 667 M107.600 671 V676.600"/><path d="M167.200 730.600 L175.800 739.800 M175.800 730.600 L167.200 739.800"/></g><rect x="847" y="721.400" width="164.600" height="8.200" fill="none" stroke="#7c7c7c" stroke-width="1"/><rect x="847" y="725.200" width="23.200" height="4.600" fill="#7c7c7c"/><rect x="870.200" y="721.200" width="46.800" height="4.400" fill="#7c7c7c"/><rect x="917" y="725.200" width="94.600" height="4.600" fill="#7c7c7c"/><text x="870.2" y="718" font-family="Liberation Sans,sans-serif" font-size="10.5" fill="#8a8a8a" text-anchor="middle">5</text><text x="1011" y="718" font-family="Liberation Sans,sans-serif" font-size="10.5" fill="#8a8a8a" text-anchor="middle">35</text><text x="847.2" y="740" font-family="Liberation Sans,sans-serif" font-size="10.5" fill="#8a8a8a" text-anchor="middle">0</text><text x="917.6" y="740" font-family="Liberation Sans,sans-serif" font-size="10.5" fill="#8a8a8a" text-anchor="middle">15</text><path d="M795 756.500 H1041 M1040.500 511 V757" stroke="#fff" stroke-width="1" fill="none"/><rect x="1029.500" y="745.500" width="11" height="11" fill="none" stroke="#fff" stroke-width="1"/></svg>
<div id="btabs"></div>
<svg style="left:83px;top:760px" width="959" height="19" viewBox="83 760 959 19"><rect x="84.500" y="760.500" width="15" height="16" fill="#fafafa" stroke="#c6c6c6"/><rect x="99.500" y="760.500" width="15" height="16" fill="#fafafa" stroke="#c6c6c6"/><path d="M96 763.400 V773.600 L90.600 768.500 Z M105 763.400 V773.600 L110.400 768.500 Z" fill="#6e6e6e"/><path d="M116 760.500 L123 777 H157 L163.600 760.500 Z" fill="#fff"/><path d="M162.500 776.500 H248" stroke="#bdbdbd" stroke-width="1" fill="none"/><path d="M116 760.500 L123 777 M163.200 760.500 L156.200 776.800 M158.600 770.600 L162.600 776.800 M200.700 760.500 L208.200 776.800 M202.400 776.800 L205.500 769.800 M255.600 760.500 L248.100 776.800" fill="none" stroke="#222" stroke-width="1"/></svg>
<span style="left:128px;top:760px;font-size:12px;line-height:18px;white-space:nowrap">模型</span>
<span style="left:167px;top:760px;font-size:12px;line-height:18px;white-space:nowrap">布局1</span>
<span style="left:213px;top:760px;font-size:12px;line-height:18px;white-space:nowrap">布局2</span>
<div id="split"></div>
<div id="cmd">
<div style="left:2px;top:-1px;width:2px;height:55px;background:#6c6c6c"></div>
<div style="left:2px;top:-1px;width:1120px;height:1px;background:#6c6c6c"></div>
<div style="left:4px;top:31px;width:1117px;height:1px;background:#8a8a8a"></div>
<div style="left:1103px;top:0;width:18px;height:31px;background:#f0f0f0"></div>
<div style="left:1032px;top:34px;width:71px;height:17px;background:#f0f0f0"></div>
<div style="left:1048px;top:34px;width:17px;height:17px;background:#cdcdcd"></div>
<svg style="left:1030px;top:0" width="92" height="54" viewBox="1031 784 92 54"><g fill="none" stroke="#505050" stroke-width="1.600"><path d="M1107.600 794.400 L1111.600 790.400 L1115.600 794.400 M1107.600 805.600 L1111.600 809.600 L1115.600 805.600 M1043 822.600 L1039 826.600 L1043 830.600 M1092.600 822.600 L1096.600 826.600 L1092.600 830.600"/></g></svg>
<span style="left:6px;top:-2px;font-family:&quot;Noto Serif CJK SC&quot;,&quot;Liberation Serif&quot;,serif;font-size:13px;line-height:16px;white-space:nowrap;font-weight:500">指定圆的直径</span><span style="left:84px;top:-1px;font-family:&quot;Liberation Mono&quot;,monospace;font-size:11px;line-height:16px;white-space:nowrap;letter-spacing:-0.1px;transform:scaleY(1.16);transform-origin:0 60%">&lt;50.000&gt;:</span><span style="left:153px;top:-1px;font-family:&quot;Liberation Mono&quot;,monospace;font-size:11px;line-height:16px;white-space:nowrap;letter-spacing:-0.1px;transform:scaleY(1.16);transform-origin:0 60%">50</span>
<span style="left:6px;top:15px;font-family:&quot;Noto Serif CJK SC&quot;,&quot;Liberation Serif&quot;,serif;font-size:13px;line-height:16px;white-space:nowrap;font-weight:500">命令</span><span style="left:32px;top:16px;font-family:&quot;Liberation Mono&quot;,monospace;font-size:11px;line-height:16px;white-space:nowrap;letter-spacing:-0.1px;transform:scaleY(1.16);transform-origin:0 60%">:</span>
<span style="left:6px;top:32px;font-family:&quot;Noto Serif CJK SC&quot;,&quot;Liberation Serif&quot;,serif;font-size:13px;line-height:16px;white-space:nowrap;font-weight:500">命令</span><span style="left:32px;top:33px;font-family:&quot;Liberation Mono&quot;,monospace;font-size:11px;line-height:16px;white-space:nowrap;letter-spacing:-0.1px;transform:scaleY(1.16);transform-origin:0 60%">:</span>
<div style="left:45px;top:34px;width:2px;height:15px;background:#000"></div>
</div>
<div id="status">
<span class="st" style="left:4px;white-space:pre;word-spacing:2.5px;font-size:12px">498239.900293,  173976.705090,  0.000000</span>
<span class="st" style="left:590px">栅格</span>
<div class="sbox" style="left:622px;width:35px"></div><span class="st" style="left:626px">正交</span>
<span class="st" style="left:662px">极轴</span>
<div class="sbox" style="left:695px;width:58px"></div><span class="st" style="left:698px">对象捕捉</span>
<div class="sbox" style="left:755px;width:58px"></div><span class="st" style="left:758px">对象追踪</span>
<div class="sbox" style="left:815px;width:36px"></div><span class="st" style="left:818px">DYN</span>
<div class="sbox" style="left:853px;width:34px"></div><span class="st" style="left:856px">线宽</span>
<span class="st" style="left:891px;color:#2222cc;font-size:12px">提交软件问题或增加新功能</span>
<div style="left:1046px;top:2px;width:73px;height:17px;background:#f9f9f9"></div>
<svg style="left:1050px;top:3px" width="20" height="16" viewBox="0 0 20 16"><path d="M1.600 16 L4.600 1.600 L8 1.200 L10 7 L11.600 1.200 L15 1.200 L18.400 16 L13.600 16 L12.600 9 L10.400 16 L8.600 16 L6.600 9.600 L5.600 16 Z" fill="#1f9c88"/><path d="M2.600 13.600 L12.400 4 M7.600 16 L16.400 8.600" stroke="#d8f4ee" stroke-width="1" fill="none"/></svg>
<span class="st" style="left:1071px;top:4px;font-size:13px;color:#1c2a44">MxCAD</span>
</div>
<div id="bl"></div><div id="bl2"></div><div id="bt"></div><div id="br"></div>
</div>
</body></html>
